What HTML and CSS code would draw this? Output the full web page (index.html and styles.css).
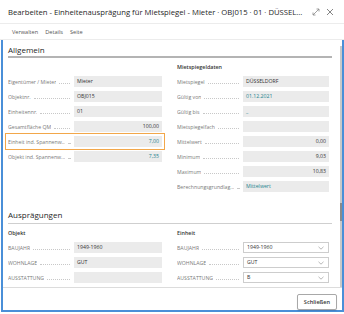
FILE: index.html
```html
<!DOCTYPE html>
<html>
<head>
  <title>Einheitenausprägung</title>
  <link rel="stylesheet" href="styles.css">
</head>
<body>
  <div class="dialog">
    <div class="titlebar">
      <span class="title">Bearbeiten - Einheitenausprägung für Mietspiegel - Mieter · OBJ015 · 01 · DÜSSEL...</span>
      <span class="win-icons">
        <svg width="8" height="8" viewBox="0 0 8 8"><path d="M1 7 L7 1 M4.5 1 H7 V3.5 M1 4.5 V7 H3.5" fill="none" stroke="#888" stroke-width="0.8"/></svg>
        <svg width="8" height="8" viewBox="0 0 8 8"><path d="M1 1 L7 7 M7 1 L1 7" fill="none" stroke="#777" stroke-width="0.9"/></svg>
      </span>
    </div>
    <div class="menu">
      <span>Verwalten</span>
      <span>Details</span>
      <span>Seite</span>
    </div>

    <div class="main">
      <div class="scroll-wrap">
        <div class="scroll">
          <!-- Allgemein -->
          <h2 class="group-head heavy">Allgemein</h2>
          <div class="cols">
            <div class="col">
              <h3>&nbsp;</h3>
              <div class="field"><span class="label"><span class="text">Eigentümer / Mieter</span><span class="dots"></span></span><span class="value">Mieter</span></div>
              <div class="field"><span class="label"><span class="text">Objektnr.</span><span class="dots"></span></span><span class="value">OBJ015</span></div>
              <div class="field"><span class="label"><span class="text">Einheitennr.</span><span class="dots"></span></span><span class="value">01</span></div>
              <div class="field"><span class="label"><span class="text">Gesamtfläche QM</span><span class="dots"></span></span><span class="value num">100,00</span></div>
              <div class="field focused"><span class="label"><span class="text">Einheit ind. Spannenw...</span><span class="dots"></span></span><span class="value num link">7,00</span></div>
              <div class="field"><span class="label"><span class="text">Objekt ind. Spannenw...</span><span class="dots"></span></span><span class="value num link">7,35</span></div>
            </div>
            <div class="col">
              <h3>Mietspiegeldaten</h3>
              <div class="field"><span class="label"><span class="text">Mietspiegel</span><span class="dots"></span></span><span class="value">DÜSSELDORF</span></div>
              <div class="field"><span class="label"><span class="text">Gültig von</span><span class="dots"></span></span><span class="value link">01.12.2021</span></div>
              <div class="field"><span class="label"><span class="text">Gültig bis</span><span class="dots"></span></span><span class="value link">_</span></div>
              <div class="field"><span class="label"><span class="text">Mietspiegelfach</span><span class="dots"></span></span><span class="value"></span></div>
              <div class="field"><span class="label"><span class="text">Mittelwert</span><span class="dots"></span></span><span class="value num">0,00</span></div>
              <div class="field"><span class="label"><span class="text">Minimum</span><span class="dots"></span></span><span class="value num">9,03</span></div>
              <div class="field"><span class="label"><span class="text">Maximum</span><span class="dots"></span></span><span class="value num">10,83</span></div>
              <div class="field"><span class="label"><span class="text">Berechnungsgrundlag...</span><span class="dots"></span></span><span class="value link">Mittelwert</span></div>
            </div>
          </div>

          <!-- Ausprägungen -->
          <h2 class="group-head">Ausprägungen</h2>
          <div class="cols">
            <div class="col">
              <h3>Objekt</h3>
              <div class="field"><span class="label"><span class="text">BAUJAHR</span><span class="dots"></span></span><span class="value">1949-1960</span></div>
              <div class="field"><span class="label"><span class="text">WOHNLAGE</span><span class="dots"></span></span><span class="value">GUT</span></div>
              <div class="field"><span class="label"><span class="text">AUSSTATTUNG</span><span class="dots"></span></span><span class="value"></span></div>
              <div class="field"><span class="label"><span class="text">&nbsp;</span></span><span class="value"></span></div>
            </div>
            <div class="col">
              <h3>Einheit</h3>
              <div class="field"><span class="label"><span class="text">BAUJAHR</span><span class="dots"></span></span><span class="value select">1949-1960<svg class="chev" width="6" height="4" viewBox="0 0 6 4"><path d="M0.5 0.8 L3 3.2 L5.5 0.8" fill="none" stroke="#999" stroke-width="0.7"/></svg></span></div>
              <div class="field"><span class="label"><span class="text">WOHNLAGE</span><span class="dots"></span></span><span class="value select">GUT<svg class="chev" width="6" height="4" viewBox="0 0 6 4"><path d="M0.5 0.8 L3 3.2 L5.5 0.8" fill="none" stroke="#999" stroke-width="0.7"/></svg></span></div>
              <div class="field"><span class="label"><span class="text">AUSSTATTUNG</span><span class="dots"></span></span><span class="value select">B<svg class="chev" width="6" height="4" viewBox="0 0 6 4"><path d="M0.5 0.8 L3 3.2 L5.5 0.8" fill="none" stroke="#999" stroke-width="0.7"/></svg></span></div>
              <div class="field"><span class="label"><span class="text">&nbsp;</span></span><span class="value select"></span></div>
            </div>
          </div>
        </div>
        <div class="track"></div>
      </div>
      <div class="footer">
        <button class="close-btn">Schließen</button>
      </div>
    </div>
  </div>
</body>
</html>
```

FILE: styles.css
```css
html, body {
  margin: 0;
  padding: 0;
  background-color: #ffffff;
}
body {
  font-family: "Open Sans", "Noto Sans", sans-serif;
  color: #333;
  width: 344px;
  height: 314px;
  overflow: hidden;
}
.dialog {
  width: 344px;
}

/* Title bar */
.titlebar {
  height: 24px;
  display: flex;
  align-items: center;
  justify-content: space-between;
  padding: 0 10px 0 8px;
  border-bottom: 1px solid #ececec;
  box-sizing: border-box;
}
.title {
  font-size: 7.7px;
  color: #262626;
  white-space: nowrap;
}
.win-icons {
  display: flex;
  gap: 6px;
  align-items: center;
}
.win-icons svg {
  display: block;
}

/* Menu */
.menu {
  height: 16px;
  display: flex;
  align-items: center;
  gap: 7px;
  padding-left: 12px;
  font-size: 5.6px;
  color: #555;
  border-bottom: 1px solid #ececec;
  box-sizing: border-box;
}

/* Main area */
.main {
  margin-left: 1px;
  width: 343px;
  box-sizing: border-box;
  border-left: 2px solid #4a8fd8;
  border-right: 2px solid #4a8fd8;
  border-bottom: 2px solid #4a8fd8;
}
.scroll-wrap {
  display: flex;
  height: 247px;
}
.scroll {
  flex: 1;
  overflow: hidden;
  padding: 0 8px 0 5px;
}
.track {
  width: 2px;
  background: linear-gradient(#c9c9c9 0, #c9c9c9 157px, #8a8a8a 157px, #8a8a8a 175px, #c9c9c9 175px);
  margin-top: 6px;
}

.group-head {
  margin: 0;
  font-weight: normal;
  font-size: 8px;
  line-height: 10px;
  color: #262626;
  border-bottom: 1px solid #cfcfcf;
  margin-top: 18px;
  padding-bottom: 3px;
}
.group-head.heavy {
  margin-top: 5px;
  padding-bottom: 1px;
  border-bottom: 2px solid #b4b4b4;
}

.cols {
  display: grid;
  grid-template-columns: 154px 152px;
  column-gap: 15px;
}
.col {
  display: flex;
  flex-direction: column;
  gap: 4px;
}
.col h3 {
  margin: 5px 0 1px 0;
  font-size: 5.4px;
  line-height: 8px;
  font-weight: 600;
  color: #333;
}

.field {
  display: grid;
  grid-template-columns: 62px 1fr;
  column-gap: 4px;
  height: 11px;
  align-items: center;
  font-size: 5.2px;
}
.field.focused {
  outline: 1px solid #f2a74a;
  outline-offset: 2px;
}
.label {
  display: flex;
  align-items: baseline;
  color: #7a7a7a;
  min-width: 0;
}
.label .text {
  white-space: nowrap;
  overflow: hidden;
}
.label .dots {
  flex: 1;
  min-width: 2px;
  margin-left: 3px;
  border-bottom: 1px dotted #c8c8c8;
}
.value {
  height: 11px;
  line-height: 11px;
  background-color: #ebebeb;
  padding: 0 3px;
  color: #333;
  white-space: nowrap;
  overflow: hidden;
  box-sizing: border-box;
}
.value.num {
  text-align: right;
}
.value.link {
  color: #23838f;
}
.value.select {
  background-color: #ffffff;
  border: 1px solid #cdcdcd;
  line-height: 9px;
  display: flex;
  align-items: center;
  justify-content: space-between;
}
.chev {
  display: block;
  margin-right: 1px;
}

/* Footer */
.footer {
  height: 23px;
  border-top: 1px solid #dcdcdc;
  display: flex;
  justify-content: flex-end;
  align-items: center;
  padding-right: 5px;
  box-sizing: border-box;
}
.close-btn {
  font-family: "Open Sans", "Noto Sans", sans-serif;
  font-size: 5.6px;
  font-weight: 600;
  color: #333;
  background-color: #ffffff;
  border: 1px solid #a8a8a8;
  border-radius: 2px;
  width: 40px;
  height: 16px;
  padding: 0;
  margin-top: 6px;
  box-shadow: 0 1px 1px rgba(0, 0, 0, 0.12);
}
```
